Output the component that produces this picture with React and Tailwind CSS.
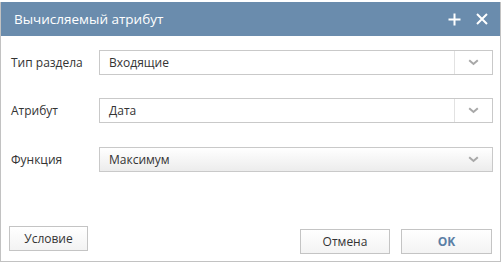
import React from "react";

function Chevron() {
  return (
    <svg width="11" height="7" viewBox="0 0 11 7">
      <path d="M1.2 1.2 L5.5 5 L9.8 1.2" fill="none" stroke="#a8a8a8" strokeWidth="2" />
    </svg>
  );
}

function Select({ value, gradient }) {
  return (
    <div
      className={
        "flex h-[25px] w-[394px] border border-[#c9c9c9] " +
        (gradient ? "bg-gradient-to-b from-white to-[#ececec]" : "bg-white")
      }
    >
      <div className="flex flex-1 items-center pl-[9px] text-[12px] text-[#333]">{value}</div>
      <div
        className={
          "flex w-[38px] items-center justify-center " +
          (gradient ? "" : "border-l border-[#e2e2e2]")
        }
      >
        <Chevron />
      </div>
    </div>
  );
}

function Row({ label, value, gradient, mt }) {
  return (
    <div className={"flex items-center " + mt}>
      <div className="w-[98px] pl-[10px] text-[12px] text-[#333]">{label}</div>
      <Select value={value} gradient={gradient} />
    </div>
  );
}

export default function App() {
  return (
    <div
      className="h-[263px] w-[502px] bg-white pt-[2px]"
      style={{ fontFamily: '"Open Sans", "Noto Sans", sans-serif' }}
    >
      <div className="flex h-[260px] w-[501px] flex-col border-x border-b border-[#c2c2c2] bg-white">
        <div className="flex h-[34px] items-center justify-between bg-[#6a8cad] pl-[13px] pr-[12px] text-white">
          <div className="text-[13.5px]">Вычисляемый атрибут</div>
          <div className="flex items-center gap-[15px]">
            <svg width="13" height="13" viewBox="0 0 13 13">
              <path d="M6.5 0.5 V12.5 M0.5 6.5 H12.5" stroke="white" strokeWidth="2" />
            </svg>
            <svg width="12" height="12" viewBox="0 0 12 12">
              <path d="M1 1 L11 11 M11 1 L1 11" stroke="white" strokeWidth="2" />
            </svg>
          </div>
        </div>
        <div className="flex flex-1 flex-col">
          <Row label="Тип раздела" value="Входящие" mt="mt-[14px]" />
          <Row label="Атрибут" value="Дата" mt="mt-[23px]" />
          <Row label="Функция" value="Максимум" gradient mt="mt-[24px]" />
        </div>
        <div className="flex items-start pb-[7px] pl-[8px] pr-[8px]">
          <button className="h-[25px] w-[79px] border border-[#c4c4c4] bg-gradient-to-b from-white to-[#f3f3f3] text-[12px] text-[#333]">
            Условие
          </button>
          <div className="ml-auto mt-[3px] flex gap-[11px]">
            <button className="h-[25px] w-[90px] border border-[#c4c4c4] bg-gradient-to-b from-white to-[#f3f3f3] text-[12px] text-[#333]">
              Отмена
            </button>
            <button className="h-[25px] w-[91px] border border-[#c4c4c4] bg-gradient-to-b from-white to-[#f3f3f3] text-[12px] font-bold text-[#5b7fa5]">
              OK
            </button>
          </div>
        </div>
      </div>
    </div>
  );
}
